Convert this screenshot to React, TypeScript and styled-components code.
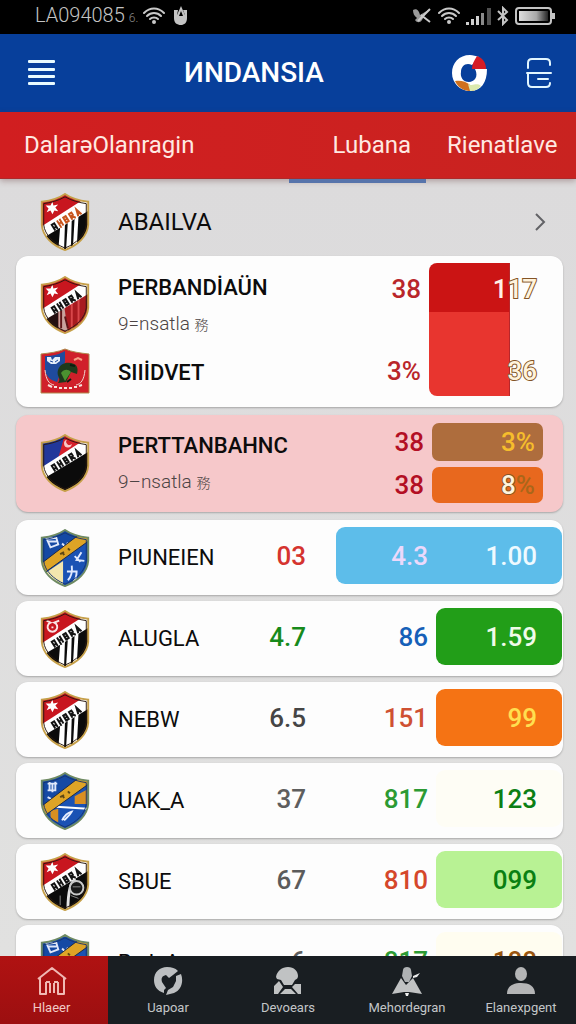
import React from "react";
import styled, { createGlobalStyle, css } from "styled-components";

const GlobalStyle = createGlobalStyle`
  *, *::before, *::after { box-sizing: border-box; }
  body {
    margin: 0;
    background: #dfdede;
    font-family: Roboto, "Noto Sans CJK SC", sans-serif;
    color: #0c0c0c;
  }
  button { font: inherit; color: inherit; background: none; border: 0; padding: 0; cursor: pointer; }
  ul { list-style: none; margin: 0; padding: 0; }
  svg { display: block; flex: none; }
`;

const Screen = styled.div`
  display: flex;
  flex-direction: column;
  height: 100vh;
`;

const StatusBar = styled.div`
  display: flex;
  align-items: center;
  justify-content: space-between;
  flex: none;
  height: 34px;
  padding: 0 21px 2px 35px;
  background: #000;
  color: #c4c4c4;
`;

const StatusGroup = styled.div<{ $gap: number }>`
  display: flex;
  align-items: center;
  gap: ${(p) => p.$gap}px;
`;

const Carrier = styled.span`
  font-size: 20px;
  line-height: 30px;
  font-weight: 300;
`;

const CarrierMark = styled.small`
  font-size: 12px;
  margin-left: 4px;
  color: #8a8a8a;
`;

const AppBar = styled.header`
  display: grid;
  grid-template-columns: 1fr auto 1fr;
  align-items: center;
  flex: none;
  height: 78px;
  padding: 0 24px 0 28px;
  background: #073f9b;
  color: #fff;
`;

const Title = styled.h1`
  margin: 0;
  padding-right: 72px;
  font-size: 28px;
  line-height: 36px;
  font-weight: 500;
`;

const AppBarActions = styled.div`
  display: flex;
  align-items: center;
  justify-content: flex-end;
  gap: 38px;
`;

const TabStrip = styled.nav`
  position: relative;
  z-index: 1;
  display: flex;
  flex: none;
  height: 67px;
  background: linear-gradient(90deg, #d11e20, #c92320);
  border-bottom: 1px solid #ad2a2a;
  box-shadow: 0 2px 6px rgba(90, 40, 40, 0.35);
`;

const Tab = styled.button<{ $active?: boolean; $width?: number; $align?: "left" | "right" }>`
  position: relative;
  flex: ${(p) => (p.$width ? `0 0 ${p.$width}px` : "1")};
  padding: 0 15px 0 ${(p) => (p.$width ? 21 : 24)}px;
  text-align: ${(p) => p.$align ?? "left"};
  white-space: nowrap;
  font-size: 24px;
  line-height: 32px;
  color: #ffe9e2;
  ${(p) =>
    p.$active &&
    css`
      &::after {
        content: "";
        position: absolute;
        left: 0;
        right: 0;
        bottom: -5px;
        height: 4px;
        background: #5774ab;
      }
    `}
`;

const Content = styled.main`
  flex: 1;
  min-height: 0;
  overflow-y: auto;
  scrollbar-width: none;
  padding: 0 13px 8px 16px;
  background: linear-gradient(180deg, #dcdbdc, #e1e1e0);
`;

const LeagueRow = styled.button`
  display: grid;
  grid-template-columns: 78px 1fr auto;
  align-items: center;
  width: 100%;
  height: 77px;
  padding: 8px 16px 0 24px;
  text-align: left;
  font-size: 24px;
  line-height: 32px;
`;

const cardSurface = css`
  border-radius: 12px;
  background: #fdfdfd;
  box-shadow: 0 1px 2px rgba(0, 0, 0, 0.25);
`;

const PairCard = styled.section`
  ${cardSurface}
  display: grid;
  grid-template-columns: 78px 1fr 50px 8px 108px;
  grid-template-rows: 83px 50px;
  align-items: center;
  padding: 7px 26px 11px 24px;
  margin-bottom: 8px;
`;

const AlertCard = styled(PairCard)`
  grid-template-columns: 78px 1fr 50px 8px 111px;
  grid-template-rows: 38px 36px;
  row-gap: 6px;
  padding: 8px 20px 9px 24px;
  background: #f6c8ca;
`;

const CrestCell = styled.div<{ $rows?: number }>`
  grid-column: 1;
  grid-row: span ${(p) => p.$rows ?? 1};
`;

const TeamBlock = styled.div<{ $rows?: number }>`
  grid-column: 2;
  grid-row: span ${(p) => p.$rows ?? 1};
  padding-top: 3px;
  white-space: nowrap;
`;

const TeamName = styled.h2<{ $strong?: boolean }>`
  margin: 0;
  font-size: 22px;
  line-height: 36px;
  font-weight: ${(p) => (p.$strong ? 500 : 400)};
  white-space: nowrap;
`;

const TeamNote = styled.p`
  margin: 0;
  font-size: 19px;
  line-height: 36px;
  font-weight: 300;
  color: #4c4444;
`;

const NoteGlyph = styled.span`
  font-size: 14px;
`;

const Figure = styled.span<{ $color: string; $column: number; $row?: number; $top?: boolean; $inset?: number }>`
  grid-column: ${(p) => p.$column};
  grid-row: ${(p) => p.$row ?? 1};
  align-self: ${(p) => (p.$top ? "start" : "center")};
  padding-top: ${(p) => (p.$top ? 8 : 0)}px;
  padding-right: ${(p) => p.$inset ?? 0}px;
  text-align: right;
  font-size: 26px;
  line-height: 36px;
  font-weight: 500;
  color: ${(p) => p.$color};
`;

const Outlined = styled.span`
  color: #fff3dc;
  -webkit-text-stroke: 2px #845426;
  paint-order: stroke fill;
`;

const PairMeter = styled.div`
  grid-column: 5;
  grid-row: 1 / 3;
  align-self: stretch;
  width: 75%;
  border-radius: 8px 0 0 8px;
  border-right: 1px solid #b8262a;
  background: linear-gradient(180deg, #cb1414 49px, #e8352f 49px);
`;

const Chip = styled.div<{ $fill: string; $row: number }>`
  grid-column: 5;
  grid-row: ${(p) => p.$row};
  align-self: stretch;
  border-radius: 7px;
  background: ${(p) => p.$fill};
`;

const TeamList = styled.ul`
  display: grid;
  gap: 6px;
`;

const TeamCard = styled.li`
  ${cardSurface}
  display: grid;
  grid-template-columns: 78px 1fr 90px 100px 126px;
  align-items: center;
  height: 75px;
  padding: 0 1px 0 24px;
`;

const Highlight = styled.div<{ $fill: string; $wide?: boolean }>`
  grid-column: ${(p) => (p.$wide ? 4 : 5)} / 6;
  grid-row: 1;
  height: 57px;
  margin-bottom: 5px;
  border-radius: 9px;
  background: ${(p) => p.$fill};
`;

const RowFigure = styled(Figure)`
  padding-bottom: 4px;
`;

const BottomNav = styled.nav`
  display: grid;
  grid-template-columns: 108fr 120fr 120fr 118fr 110fr;
  flex: none;
  height: 68px;
  background: #191e22;
`;

const NavItem = styled.button<{ $active?: boolean }>`
  display: flex;
  flex-direction: column;
  align-items: center;
  justify-content: center;
  padding: 4px 5px 0 0;
  gap: 2px;
  font-size: 13px;
  line-height: 20px;
  color: ${(p) => (p.$active ? "#f1c9c4" : "#c3c6c8")};
  background: ${(p) => (p.$active ? "linear-gradient(180deg, #b01212, #9c0f10)" : "none")};
  &:not(:first-child) { padding-right: 0; }
`;

type CrestKind = "star" | "crimson" | "navy" | "azure" | "ring" | "tools" | "hook";

const SHIELD = "M25 1 C18 6 9 8 1 9 V33 C2 45 12 54 25 59 C38 54 48 45 49 33 V9 C41 8 32 6 25 1Z";

function BandMarks({ ink }: { ink: string }) {
  return (
    <g transform="translate(12 36) rotate(-32)" strokeWidth="2" fill="none">
      <path d="M1 4 V-3 H4 V4 M1 1 H4" stroke="#121212" />
      <path d="M8 -4 V4 M11 -4 V4 M8 0 H11 M7 4 H9" stroke={ink} />
      <path d="M15 -4 V4 M15 -3 H18 V3 H15 M16 0 H18" stroke={ink} />
      <path d="M22 -4 V4 M22 -3 H25 V0 H23 L26 4" stroke={ink} />
      <path d="M29 4 L31 -3 L33 4 M30 2 H32" stroke={ink} />
    </g>
  );
}

function Crest({ kind, id, rust }: { kind: CrestKind; id: string; rust?: boolean }) {
  const blue = kind === "azure" || kind === "tools";
  const navy = kind === "navy";
  const clip = `crest-${id}`;
  const top = blue ? "#1549a4" : navy ? "#22379a" : "#c8161f";
  const ink = rust ? "#c8551e" : "#151515";
  return (
    <svg width="50" height="58" viewBox="0 0 50 60" aria-hidden="true">
      <clipPath id={clip}>
        <path d={SHIELD} />
      </clipPath>
      <g clipPath={`url(#${clip})`}>
        <rect width="50" height="60" fill={top} />
        {navy && <path d="M25 0 L50 0 V12 L16 32 Z" fill="#d5202a" />}
        {navy && <path d="M27 6 a4 4 0 1 0 5 4 a3 3 0 1 1 -5 -4" fill="#f7c9c9" />}
        <path
          d="M0 44 L50 12 V60 H0Z"
          fill={kind === "crimson" ? "#a81a1f" : blue ? "#1a52b4" : "#0b0b0b"}
        />
        {(kind === "star" || kind === "ring") && (
          <path d="M20 35 L25 31 L24 60 H18Z M28 29 L32 27 L31 60 H26Z M35 25 L39 23 L37 60 H33Z" fill="#fff" />
        )}
        {kind === "crimson" && (
          <>
            <path d="M18 34 L24 30 L28 58 L18 54Z" fill="#c9a29d" />
            <path d="M0 44 L18 34 L18 60Z" fill="#240f10" />
            <path d="M32 26 V56 M39 24 V50" stroke="#d9474a" strokeWidth="2" />
            <path d="M21 36 v18 M25 42 l3 12" stroke="#5d1517" strokeWidth="2" />
          </>
        )}
        {kind === "hook" && (
          <>
            <path d="M36 27 C30 30 28 42 28 59" stroke="#e4e4e4" strokeWidth="3" fill="none" />
            <circle cx="37" cy="36" r="7" fill="#1a1a1a" stroke="#c9c9c9" strokeWidth="2" />
            <path d="M33 35 h8 M31 44 L39 47 M20 44 v10" stroke="#8b8b8b" strokeWidth="1" />
          </>
        )}
        {kind === "azure" && (
          <>
            <path d="M4 46 L23 33 V60 H10Z" fill="#f3e6ae" />
            <path d="M27 44 h11 M32 38 c1 8 -1 12 -4 15 M37 44 c0 5 -1 8 -3 10 M35 28 l6 6 M42 24 l-5 8 l8 1" stroke="#dfe9ff" strokeWidth="2" fill="none" />
            <path d="M6 10 l10 -1 l2 7 l-8 3z M8 13 h8 M22 15 l4 4 l2 -5" fill="none" stroke="#dfe7fa" strokeWidth="2" />
          </>
        )}
        {kind === "tools" && (
          <>
            <path d="M35 25 L48 18 V33 H35Z M10 40 L18 38 V52 L10 48Z" fill="#d98f22" />
            <path d="M16 36 L48 38" stroke="#fff" strokeWidth="2" />
            <path d="M22 50 C25 44 28 42 32 41 C30 45 27 47 24 50" stroke="#e8efff" strokeWidth="2" fill="none" />
            <path d="M7 12 h10 M9 10 v9 M15 10 v9 M7 19 h9 M12 12 v9 M7 26 l4 2" stroke="#dfe7fa" strokeWidth="2" />
          </>
        )}
        <path
          d={blue ? "M0 36 L38 7 L50 7 V12 L0 48Z" : "M0 35 L42 8 L50 7 V18 L0 48Z"}
          fill={blue ? "#dea426" : "#fff"}
          stroke={blue ? "#1b2745" : "none"}
          strokeWidth="1"
        />
        {blue ? (
          <path d="M20 26 l4 -2 M23 25 l1 2 M28 20 l2 2" stroke="#5d4714" strokeWidth="2" />
        ) : (
          <BandMarks ink={ink} />
        )}
        {(kind === "star" || kind === "crimson" || kind === "hook") && (
          <path d="M12 9 l1 4 l5 -1 l-3 3 l3 4 l-4 -1 l-2 4 l-2 -4 l-4 2 l2 -4 l-3 -3 l5 0z" fill="#fff" />
        )}
        {kind === "ring" && (
          <path d="M6 11 l4 2 a5 5 0 1 0 4 0 l5 -2 M11 18 h2" fill="none" stroke="#fbe5e5" strokeWidth="2" />
        )}
      </g>
      <path d={SHIELD} fill="none" stroke={blue ? "#6f8a63" : "#c6a04a"} strokeWidth="2" />
      <path
        d="M25 4 C18 8 10 10 3 11 V33 C4 43 13 52 25 57 C37 52 46 43 47 33 V11 C40 10 32 8 25 4Z"
        fill="none"
        stroke={blue ? "#17356f" : "#2b1a10"}
        strokeWidth="1"
      />
    </svg>
  );
}

function SquareCrest() {
  return (
    <svg width="50" height="46" viewBox="0 0 50 46" aria-hidden="true">
      <path d="M1 6 C10 5 18 4 25 1 C32 4 40 5 49 6 V45 H1Z" fill="#d0202a" stroke="#b08a4d" strokeWidth="1" />
      <path d="M5 8 C13 8 20 6 25 3 V14 L17 34 C9 32 6 27 5 22Z" fill="#1f4b9e" />
      <path d="M5 22 C6 32 9 36 14 37 M45 22 C44 32 41 36 36 37" fill="none" stroke="#eed6cf" strokeWidth="1" />
      <path d="M7 9 h4 l1 3 l3 -3 h5 v4 l-4 3 h-5 l-4 -3z" fill="#e5eefa" />
      <path d="M10 13 l3 1 M15 14 l3 -2" stroke="#1f4b9e" strokeWidth="1" />
      <path d="M18 22 C20 15 28 13 34 16 C38 18 38 22 37 26 L31 24 L26 34 L18 35 C22 30 16 29 18 22Z" fill="#1d3a1c" />
      <path d="M21 25 C24 21 28 21 31 24 L25 33Z" fill="#4b9130" />
      <path d="M30 17 l5 1 M27 34 l4 -3" stroke="#0c1c10" strokeWidth="2" />
      <path d="M34 12 l4 -2 l4 2" stroke="#f5a184" strokeWidth="2" fill="none" />
      <path d="M8 37 l4 2 M14 39 h3 M19 40 h3 M24 40 h3 M29 40 h3 M34 39 h3 M39 38 l3 -1" stroke="#f8e2dc" strokeWidth="2" />
    </svg>
  );
}

function Wifi({ size }: { size: number }) {
  return (
    <svg width={size} height="18" viewBox="0 0 22 18" fill="none" stroke="#c9c9c9" strokeWidth="2" strokeLinecap="round" aria-hidden="true">
      <path d="M1 6 C7 0 15 0 21 6" />
      <path d="M4 9 C8 5 14 5 18 9" />
      <path d="M7 12 C9 10 13 10 15 12" />
      <circle cx="11" cy="15" r="1" fill="#c9c9c9" />
    </svg>
  );
}

interface TeamRow {
  name: string;
  crest: CrestKind;
  first: [string, string];
  second: [string, string];
  last: [string, string];
  fill: string;
  wide?: boolean;
}

const teams: TeamRow[] = [
  { name: "PIUNEIEN", crest: "azure", first: ["03", "#d5342f"], second: ["4.3", "#ecd9fb"], last: ["1.00", "#effaff"], fill: "#5dbdea", wide: true },
  { name: "ALUGLA", crest: "ring", first: ["4.7", "#178a1b"], second: ["86", "#1660b8"], last: ["1.59", "#effbe9"], fill: "#229e18" },
  { name: "NEBW", crest: "star", first: ["6.5", "#454545"], second: ["151", "#cf5132"], last: ["99", "#ffdf50"], fill: "#f57314" },
  { name: "UAK_A", crest: "tools", first: ["37", "#5e5e5e"], second: ["817", "#2c9a33"], last: ["123", "#0c7f14"], fill: "#fefdf5" },
  { name: "SBUE", crest: "hook", first: ["67", "#5b5b5b"], second: ["810", "#d5472b"], last: ["099", "#0a8012"], fill: "#b8f294" },
  { name: "Bəıl. A", crest: "azure", first: ["6", "#5e5e5e"], second: ["817", "#2c9a33"], last: ["188", "#9a560f"], fill: "#fffdf0" },
];

export default function App() {
  return (
    <Screen>
      <GlobalStyle />
      <StatusBar>
        <StatusGroup $gap={5}>
          <Carrier>
            LA094085<CarrierMark>6.</CarrierMark>
          </Carrier>
          <Wifi size={22} />
          <svg width="22" height="20" viewBox="0 0 22 20" aria-hidden="true">
            <path d="M4 4 H8 L7 9 H15 L13 4 H17 V12 C17 17 14 19 11 19 C7 19 4 17 4 12Z" fill="#c4c4c4" />
            <path d="M11 0 L15 9 V13 H7 V9Z" fill="#c4c4c4" />
            <path d="M11 5 l2 5 h-4z" fill="#000" />
          </svg>
        </StatusGroup>
        <StatusGroup $gap={6}>
          <svg width="20" height="18" viewBox="0 0 20 18" aria-hidden="true">
            <path d="M1 3 C5 1 7 4 8 8 L18 2 C14 6 12 9 10 13 C8 16 5 16 3 13 L5 11 C2 9 1 6 1 3Z" fill="#999" />
            <path d="M6 14 L18 2 M9 8 L18 15" stroke="#c9c9c9" strokeWidth="2" />
          </svg>
          <Wifi size={22} />
          <svg width="25" height="18" viewBox="0 0 25 18" aria-hidden="true">
            <path d="M0 15 h3 v3 h-3z M5 12 h3 v6 h-3z M10 9 h3 v9 h-3z" fill="#d0d0d0" />
            <path d="M15 6 h3 v12 h-3z" fill="#8b8b8b" />
            <path d="M21 1 h4 v17 h-4z" fill="#515151" />
          </svg>
          <svg width="12" height="20" viewBox="0 0 12 20" fill="none" stroke="#c4c4c4" strokeWidth="2" aria-hidden="true">
            <path d="M1 5 L10 14 L6 18 V2 L10 6 L1 14" />
          </svg>
          <svg width="40" height="18" viewBox="0 0 40 18" aria-hidden="true">
            <defs>
              <linearGradient id="charge">
                <stop offset="0" stopColor="#dedede" />
                <stop offset="0.6" stopColor="#a8a8a8" />
                <stop offset="1" stopColor="#262626" />
              </linearGradient>
            </defs>
            <rect x="1" y="1" width="35" height="16" rx="3" fill="none" stroke="#c4c4c4" strokeWidth="2" />
            <rect x="4" y="4" width="29" height="10" fill="url(#charge)" />
            <rect x="37" y="6" width="3" height="6" fill="#c4c4c4" />
          </svg>
        </StatusGroup>
      </StatusBar>

      <AppBar>
        <button aria-label="Menu">
          <svg width="27" height="26" viewBox="0 0 27 26" fill="#e9fbff" aria-hidden="true">
            <rect y="0" width="27" height="3" rx="1" />
            <rect y="8" width="27" height="3" rx="1" />
            <rect y="15" width="27" height="3" rx="1" />
            <rect y="22" width="27" height="3" rx="1" />
          </svg>
        </button>
        <Title>ИNDANSIA</Title>
        <AppBarActions>
          <button aria-label="Sync">
            <svg width="36" height="36" viewBox="0 0 36 36" aria-hidden="true">
              <path d="M18 0 C7 0 0 8 0 18 C0 28 8 36 18 36 C29 36 35 28 35 14 H23 C27 22 22 27 17 27 C11 27 8 22 9 17 C9 11 14 7 20 10 L27 2 C24 1 21 0 18 0Z" fill="#fff" />
              <path d="M3 26 C8 25 14 26 18 30 L22 36 C13 37 6 33 3 26Z" fill="#d0701d" />
              <path d="M16 29 C21 32 24 27 29 31 C26 35 22 36 18 36Z" fill="#dbe9ae" />
              <path d="M25 1 C31 3 34 8 34 14 H20 C20 9 22 6 25 1Z" fill="#d51c25" />
            </svg>
          </button>
          <button aria-label="Entries">
            <svg width="26" height="32" viewBox="0 0 26 32" fill="none" stroke="#e2f6ff" strokeWidth="2" strokeLinecap="round" aria-hidden="true">
              <path d="M2 11 V6 Q2 2 6 2 H20 Q24 2 24 6 V8" />
              <path d="M1 16 H25" />
              <path d="M2 16 V26 Q2 30 6 30 H20 Q24 30 24 26" />
              <path d="M12 22 H22" />
            </svg>
          </button>
        </AppBarActions>
      </AppBar>

      <TabStrip>
        <Tab>DalarəOlanragin</Tab>
        <Tab $width={137} $align="right" $active>
          Lubana
        </Tab>
        <Tab $width={150}>Rienatlave</Tab>
      </TabStrip>

      <Content>
        <LeagueRow>
          <Crest kind="star" id="league" rust />
          <span>ABAILVA</span>
          <svg width="14" height="20" viewBox="0 0 14 20" fill="none" stroke="#626266" strokeWidth="2" aria-hidden="true">
            <path d="M3 2 L11 10 L3 18" />
          </svg>
        </LeagueRow>

        <PairCard>
          <CrestCell>
            <Crest kind="crimson" id="pair" />
          </CrestCell>
          <TeamBlock>
            <TeamName $strong>PERBANDİAÜN</TeamName>
            <TeamNote>
              9=nsatla <NoteGlyph>務</NoteGlyph>
            </TeamNote>
          </TeamBlock>
          <Figure $column={3} $top $color="#b9262a">38</Figure>
          <PairMeter />
          <Figure $column={5} $top $color="#fff0e6">
            1<Outlined>17</Outlined>
          </Figure>
          <CrestCell>
            <SquareCrest />
          </CrestCell>
          <TeamBlock>
            <TeamName $strong>SIIİDVET</TeamName>
          </TeamBlock>
          <Figure $column={3} $row={2} $color="#b9262a">3%</Figure>
          <Figure $column={5} $row={2} $color="#fff">
            <Outlined>36</Outlined>
          </Figure>
        </PairCard>

        <AlertCard>
          <CrestCell $rows={2}>
            <Crest kind="navy" id="alert" />
          </CrestCell>
          <TeamBlock $rows={2}>
            <TeamName $strong>PERTTANBAHNC</TeamName>
            <TeamNote>
              9–nsatla <NoteGlyph>務</NoteGlyph>
            </TeamNote>
          </TeamBlock>
          <Figure $column={3} $row={1} $color="#b30f24">38</Figure>
          <Chip $row={1} $fill="#ae6d3d" />
          <Figure $column={5} $row={1} $inset={8} $color="#f6bd2c">3%</Figure>
          <Figure $column={3} $row={2} $color="#b30f24">38</Figure>
          <Chip $row={2} $fill="#e8681e" />
          <Figure $column={5} $row={2} $inset={8} $color="#a96619">
            <Outlined>8</Outlined>%
          </Figure>
        </AlertCard>

        <TeamList>
          {teams.map((team, index) => (
            <TeamCard key={index}>
              <Crest kind={team.crest} id={`row-${index}`} />
              <TeamName>{team.name}</TeamName>
              <RowFigure $column={3} $inset={30} $color={team.first[1]}>{team.first[0]}</RowFigure>
              <Highlight $fill={team.fill} $wide={team.wide} />
              <RowFigure $column={4} $inset={8} $color={team.second[1]}>{team.second[0]}</RowFigure>
              <RowFigure $column={5} $inset={25} $color={team.last[1]}>{team.last[0]}</RowFigure>
            </TeamCard>
          ))}
        </TeamList>
      </Content>

      <BottomNav>
        <NavItem $active>
          <svg width="30" height="30" viewBox="0 0 30 30" fill="none" stroke="#f0b9b4" strokeWidth="2" strokeLinejoin="round" aria-hidden="true">
            <path d="M1 13 L15 2 L29 13 M3 12 V28 H9 V16 M27 12 V28 H21 V16 M13 27 V17 M17 17 V27 M9 16 H13 M17 16 H21" />
          </svg>
          Hlaeer
        </NavItem>
        <NavItem>
          <svg width="30" height="30" viewBox="0 0 30 30" aria-hidden="true">
            <path d="M11 27 C4 25 1 20 1 14 C1 6 7 1 14 1 C19 1 22 2 25 5 L20 9 L16 12 L13 9 C9 10 8 12 9 16 L13 22 L11 24Z" fill="#bcbfc1" />
            <path d="M28 8 C31 16 28 24 21 27 L13 29 L15 24 L20 21 L23 15 L23 10Z" fill="#bcbfc1" />
          </svg>
          Uapoar
        </NavItem>
        <NavItem>
          <svg width="30" height="30" viewBox="0 0 30 30" aria-hidden="true">
            <path d="M3 11 C4 5 9 1 15 1 C21 1 25 5 25 10 C25 12 24 13 22 14 L19 19 H11 L8 14 L4 13Z" fill="#c0c2c3" />
            <path d="M1 28 V20 L6 15 L10 21 L5 28Z M28 28 V18 H22 L19 21 L25 28Z M7 28 L12 23 H18 L23 28Z" fill="#c0c2c3" />
          </svg>
          Devoears
        </NavItem>
        <NavItem>
          <svg width="30" height="30" viewBox="0 0 30 30" aria-hidden="true">
            <path d="M11 4 C11 0 19 0 19 4 L20 10 L17 16 H13 L10 10Z" fill="#aeb1b3" />
            <path d="M9 12 L14 19 L19 14 L21 12 L30 28 L17 26 H12 L0 28Z" fill="#c0c2c3" />
            <path d="M21 10 L28 7 L25 11 L21 12Z M13 27 h4 l-1 3 h-2z" fill="#eceded" />
          </svg>
          Mehordegran
        </NavItem>
        <NavItem>
          <svg width="30" height="30" viewBox="0 0 30 30" fill="#b4b5b6" aria-hidden="true">
            <ellipse cx="15" cy="8" rx="6" ry="7" />
            <path d="M1 28 C1 20 7 17 15 17 C23 17 29 20 29 28Z" />
          </svg>
          Elanexpgent
        </NavItem>
      </BottomNav>
    </Screen>
  );
}
